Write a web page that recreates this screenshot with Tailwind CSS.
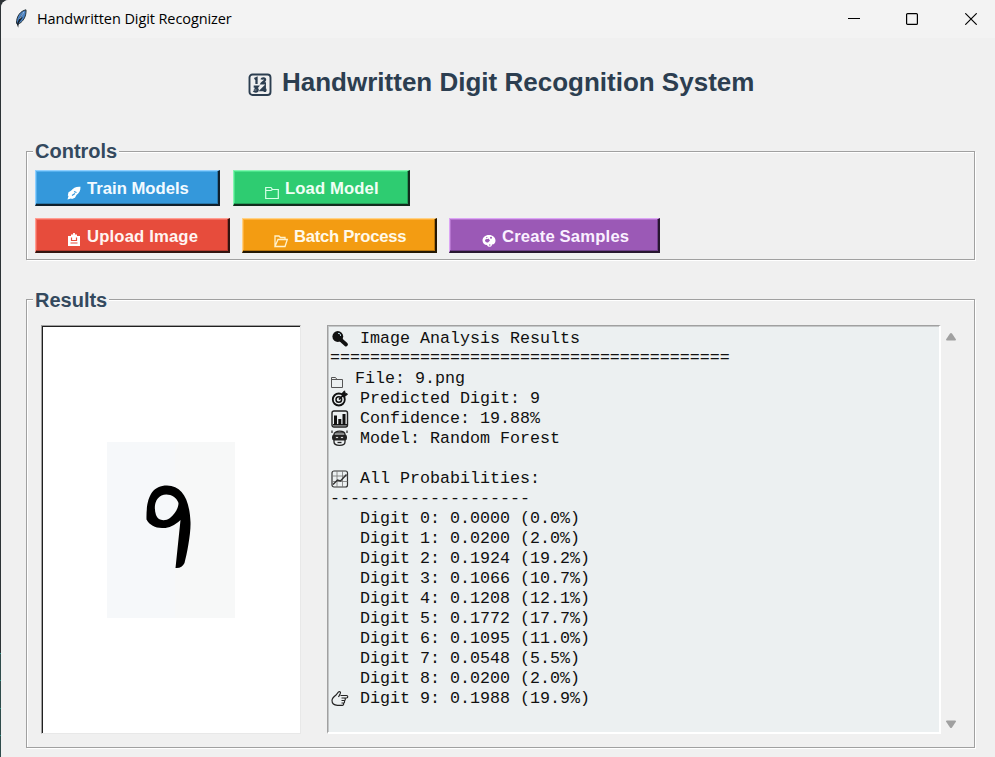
<!DOCTYPE html>
<html lang="en">
<head>
<meta charset="utf-8">
<title>Handwritten Digit Recognizer</title>
<script src="https://cdn.jsdelivr.net/npm/@tailwindcss/browser@4"></script>
</head>
<body class="w-[995px] h-[757px] overflow-hidden bg-[#2d3336] flex font-['Liberation_Sans',Arial,sans-serif]">
<div class="w-px h-[757px] shrink-0 flex flex-col justify-end">
  <div class="h-[27px] bg-[#2f4b4b] border-t border-[#2a9184]"></div>
  <div class="h-[28px] bg-[#2f4b4b] border-t border-[#2a9184]"></div>
  <div class="h-[27px] bg-[#2f4b4b] border-t border-[#2a9184]"></div>
  <div class="h-[22px] bg-[#2f4b4b] border-t border-[#2a9184]"></div>
</div>
<div class="h-[757px] w-[994px] rounded-tl-lg bg-[#f0f0f0] overflow-hidden flex flex-col">
  <header class="h-[38px] shrink-0 bg-[#f3f3f3] flex items-center pl-3">
    <svg class="w-4 h-5" viewBox="0 0 16 20"><path d="M13 .8C7.500 2 3.500 7 3.500 14L4.500 15.500C9.500 13.500 13.500 8 13 .8Z" fill="#4b83c5" stroke="#263238" stroke-width="1"/><path d="M10.500 3L8 9L10 8L5.800 14L5.200 18.800L3.800 15L7 8Z" fill="#17212b"/><path d="M10.800 3L6.500 10" stroke="#a9cdf2" stroke-width=".8"/></svg>
    <span class="ml-2 text-[14.5px] leading-5 tracking-[-0.09px] text-black font-['Open_Sans','Noto_Sans',sans-serif] whitespace-nowrap">Handwritten Digit Recognizer</span>
    <div class="ml-auto mr-[18px] flex items-center">
      <svg class="w-3 h-3" viewBox="0 0 12 12"><path d="M0 5.500H12" stroke="#000"/></svg>
      <svg class="w-3 h-3 ml-[46px]" viewBox="0 0 12 12"><rect x=".6" y=".6" width="10.800" height="10.800" rx="1" fill="none" stroke="#000" stroke-width="1.200"/></svg>
      <svg class="w-3 h-3 ml-[47px]" viewBox="0 0 12 12"><path d="M.3.3L11.700 11.700M11.700.3L.3 11.700" stroke="#000" stroke-width="1.150"/></svg>
    </div>
  </header>

  <h1 class="mt-[26px] h-9 shrink-0 flex items-center pl-[247px] text-[26px] leading-9 font-bold text-[#2c3e50] whitespace-nowrap">
    <svg class="w-6 h-6 mt-[5px] mr-[10px]" viewBox="0 0 24 24" fill="none" stroke="#2c3e50"><rect x="1.500" y="1.500" width="21" height="20.500" rx="3" stroke-width="1.900"/><path d="M6.500 6L8.500 5V11M13.500 6.500C14 4.700 17.500 5 17 7C16.700 8.500 14.500 9 13.700 10.300H18M5.700 13.700H9.500L8 15.500C10.500 15.500 10 18.700 7.800 18.500C6.700 18.500 6 18.200 5.700 17.700M16.800 19V13.500L13.300 17H18.500" stroke-width="2.300"/></svg>
    <span>Handwritten Digit Recognition System</span>
  </h1>

  <section class="mt-[51px] ml-[25px] w-[949px] h-[109px] shrink-0 border border-[#a0a0a0] shadow-[1px_1px_0_#fff,inset_1px_1px_0_#fff]">
    <h2 class="-mt-[13px] ml-[6px] w-[86px] pl-[2px] bg-[#f0f0f0] text-[20px] leading-6 font-bold text-[#34495e]">Controls</h2>
    <div class="mt-[7px] ml-2 flex gap-[13px]">
      <button class="w-[185px] h-9 bg-[#3498db] border-t border-l border-t-[#8fd0ff] border-l-[#8fd0ff] border-r-2 border-b-2 border-r-[#10202c] border-b-[#10202c] shadow-[inset_-1px_-1px_0_#2877aa,inset_1px_1px_0_#56b0ed] flex items-center pl-[31px] pt-0.5 text-[16.67px] leading-5 font-bold text-[#f2faff] whitespace-nowrap">
        <svg class="w-[14px] h-[14px] mt-[8px] mr-[6px]" viewBox="0 0 14 14"><path d="M13.500.8C9.500.3 6 2 4 4.800L1.500 6.200L.8 9.500L1.500 10L.5 13.500L4 12.600L5 13L8 11.800L9.500 9C12 7.500 13.700 4.500 13.500.8Z" fill="#fff"/><path d="M5 9.500L8 7.500M7 5.500L9.500 6.500" stroke="#3498db" stroke-width="1.200"/></svg>Train Models</button>
      <button class="w-[177px] h-9 bg-[#2ecc71] border-t border-l border-t-[#83f6b1] border-l-[#83f6b1] border-r-2 border-b-2 border-r-[#122c1d] border-b-[#122c1d] shadow-[inset_-1px_-1px_0_#249e58,inset_1px_1px_0_#4be48a] flex items-center pl-[31px] pt-0.5 text-[16.67px] leading-5 font-bold text-[#f0fff5] whitespace-nowrap">
        <svg class="w-[14px] h-[14px] mt-[9px] mr-[6px]" viewBox="0 0 14 14" fill="none" stroke="#d7ffe7" stroke-width="1.200"><path d="M.7 12.500V1.500H6L7.500 3.500H13.300V12.500ZM.7 4.500H6L7.500 3.500"/></svg><span class="tracking-[.12px]">Load Model</span></button>
    </div>
    <div class="mt-3 ml-2 flex gap-3">
      <button class="w-[195px] h-[35px] bg-[#e74c3c] border-t border-l border-t-[#ff9d92] border-l-[#ff9d92] border-r-2 border-b-2 border-r-[#321410] border-b-[#321410] shadow-[inset_-1px_-1px_0_#b43b2f,inset_1px_1px_0_#f36c5e] flex items-center pl-[31px] pt-[3px] text-[16.67px] leading-5 font-bold text-[#fff4f1] whitespace-nowrap">
        <svg class="w-[14px] h-[14px] mt-[7px] mr-[6px]" viewBox="0 0 14 14"><path d="M1 3H4V1.500H10V3H13V13H1Z" fill="#fff"/><path d="M4.500 4.500V7.500H9.500V4.500M3.500 10H10.500" stroke="#e74c3c" stroke-width="1.200" fill="none"/><path d="M7 0V6.500" stroke="#fff" stroke-width="1.800"/></svg><span class="tracking-[.16px]">Upload Image</span></button>
      <button class="w-[195px] h-[35px] bg-[#f39c12] border-t border-l border-t-[#ffd285] border-l-[#ffd285] border-r-2 border-b-2 border-r-[#231703] border-b-[#231703] shadow-[inset_-1px_-1px_0_#b8750b,inset_1px_1px_0_#ffb03a] flex items-center pl-[31px] pt-[3px] text-[16.67px] leading-5 font-bold text-[#fff9e9] whitespace-nowrap">
        <svg class="w-[14px] h-[14px] mt-[8px] mr-[6px]" viewBox="0 0 14 14" fill="none" stroke="#fff1cc" stroke-width="1.300"><path d="M1 12.500V2H5L6.500 3.500H11V5.500M1 12.500L4 5.500H13.300L11 12.500Z"/></svg><span class="tracking-[-.27px]">Batch Process</span></button>
      <button class="w-[211px] h-[35px] bg-[#9b59b6] border-t border-l border-t-[#dca5f5] border-l-[#dca5f5] border-r-2 border-b-2 border-r-[#281730] border-b-[#281730] shadow-[inset_-1px_-1px_0_#70408a,inset_1px_1px_0_#b574cf] flex items-center pl-[32px] pt-[3px] text-[16.67px] leading-5 font-bold text-[#faf0ff] whitespace-nowrap">
        <svg class="w-[14px] h-[14px] mt-[8px] mr-[6px]" viewBox="0 0 14 14"><path d="M7 1C3 1 .5 3.500.5 6.500C.5 9 2.500 11 5 11C5.500 13.500 10 13.500 10 10.500C12.500 10.500 13.500 8.500 13.500 6.500C13.500 3.500 11 1 7 1Z" fill="#fff"/><g fill="#9b59b6"><path d="M3 6C4 4.500 5.500 5.500 6.500 4.500L8 6.500L6 8.500C4 9 3 7.500 3 6Z"/><circle cx="4.800" cy="3.600" r=".7"/><circle cx="9" cy="3.700" r="1"/><circle cx="7.800" cy="11" r=".7"/></g></svg><span class="tracking-[.16px]">Create Samples</span></button>
    </div>
  </section>

  <section class="mt-[39px] ml-[25px] w-[949px] h-[449px] shrink-0 border border-[#a0a0a0] shadow-[1px_1px_0_#fff,inset_1px_1px_0_#fff]">
    <h2 class="-mt-[12px] ml-[6px] w-[76px] pl-[2px] bg-[#f0f0f0] text-[20px] leading-6 font-bold text-[#34495e]">Results</h2>
    <div class="mt-[13px] ml-[14px] flex">
      <div class="w-[260px] h-[409px] bg-white border border-t-[#a0a0a0] border-l-[#a0a0a0] border-r-[#e8e8e8] border-b-[#e8e8e8] shadow-[inset_1px_1px_0_#202020]">
        <svg class="mt-[116px] ml-[65px] w-[128px] h-[176px]" viewBox="0 0 128 176"><path d="M0 0H68V176H0Z" fill="#f6f8fa"/><path d="M68 0H128V176H68Z" fill="#f7f8f8"/><path d="M39.500 77.500C39 57 44 43.500 60 43.500C75 43.500 82.500 57 83.500 80C84 91 80 112 77.500 121C76 124.500 72.500 126.500 68.500 126L73.500 78C67 84 61 86.500 55 86C48 86 42.500 83 39.500 77.500ZM49 73C51 79 58 79.500 63 76C68 72 71.500 66 71.500 61C69.500 54 60.500 50.500 54.500 53.500C48 57 46.500 65 49 73Z" fill="#000" fill-rule="evenodd"/></svg>
      </div>
      <div class="ml-[26px] w-[614px] h-[409px] bg-[#ecf0f1] border-t border-l border-r-2 border-b-2 border-t-[#a0a0a0] border-l-[#a0a0a0] border-r-white border-b-white shadow-[inset_1px_1px_0_#c4c6c7] pt-[3px] pl-[2px] text-[16.67px] leading-5 text-[#101010] font-['Liberation_Mono','Courier_New',monospace] whitespace-nowrap overflow-hidden">
        <div class="h-5 flex items-center"><svg class="w-[18px] h-[18px] ml-px mr-[11px]" viewBox="0 0 18 18"><circle cx="6.800" cy="6.500" r="5.400" fill="#111"/><path d="M10 10L15 14.500" stroke="#111" stroke-width="3.800" stroke-linecap="round"/><path d="M7 3.500C8.500 2.800 10 4.500 9.500 6" stroke="#b9d5e0" stroke-width="1" fill="none"/></svg><span>Image Analysis Results</span></div>
        <div class="h-5 -mt-px mb-px">========================================</div>
        <div class="h-5 flex items-center"><svg class="w-[14px] h-[14px] mt-[5px] mr-[11px]" viewBox="0 0 14 14" fill="none" stroke="#555"><path d="M1.500 12.500V2.500H5.500L7 4.500H12.500V12.500ZM1.500 4.500H7"/></svg><span>File: 9.png</span></div>
        <div class="h-5 flex items-center"><svg class="w-[18px] h-[18px] ml-px mr-[11px]" viewBox="0 0 18 18" fill="none" stroke="#111"><circle cx="7.800" cy="9.500" r="6" stroke-width="1.800"/><circle cx="7.800" cy="9.500" r="2.800" stroke-width="1.500"/><path d="M8 9.500L13 4.500" stroke-width="1.700"/><path d="M11.500 3L13.500.8L14.200 3.200L16.500 4L14 6.500H11.500Z" fill="#111"/></svg><span>Predicted Digit: 9</span></div>
        <div class="h-5 flex items-center"><svg class="w-[18px] h-[18px] ml-px mr-[11px] -mt-px" viewBox="0 0 18 18"><rect x="1" y="1" width="15.500" height="16" rx="2" fill="none" stroke="#222" stroke-width="1.400"/><path d="M4.500 5.500V15M8.800 9V15M13 4V15" stroke="#111" stroke-width="3"/><path d="M2 14.800H16" stroke="#111" stroke-width="1.500"/></svg><span>Confidence: 19.88%</span></div>
        <div class="h-5 flex items-center"><svg class="w-[18px] h-[18px] ml-px mr-[11px] -mt-[2px]" viewBox="0 0 18 18" fill="none" stroke="#222"><path d="M3 5.500C3 1 14 1 14 5.500V13C14 17.500 3 17.500 3 13Z" stroke-width="1.300"/><path d="M4 3.800H13M1 1.500V4M16 1.500V4" stroke-width="1.200"/><rect x="1.500" y="6" width="14" height="5" rx="1.500" fill="#222"/><circle cx="6" cy="8.500" r="1.300" fill="#fff"/><circle cx="11" cy="8.500" r="1.300" fill="#fff"/><path d="M6.500 13.500H10.500" stroke-width="1.300"/></svg><span>Model: Random Forest</span></div>
        <div class="h-5"></div>
        <div class="h-5 flex items-center"><svg class="w-[18px] h-[18px] ml-px mr-[11px] -mt-px" viewBox="0 0 18 18" fill="none" stroke="#333"><rect x="1" y="1" width="15.500" height="16" rx="2" stroke-width="1.200"/><path d="M6 1V17M11.500 1V17M1 6H16.500M1 11.500H16.500" stroke="#777" stroke-width=".8"/><path d="M2 14.500L6.500 10L9.500 11L15.500 4.500" stroke-width="1.500"/></svg><span>All Probabilities:</span></div>
        <div class="h-5">--------------------</div>
        <div class="pl-[30px]">
          <p>Digit 0: 0.0000 (0.0%)</p>
          <p>Digit 1: 0.0200 (2.0%)</p>
          <p>Digit 2: 0.1924 (19.2%)</p>
          <p>Digit 3: 0.1066 (10.7%)</p>
          <p>Digit 4: 0.1208 (12.1%)</p>
          <p>Digit 5: 0.1772 (17.7%)</p>
          <p>Digit 6: 0.1095 (11.0%)</p>
          <p>Digit 7: 0.0548 (5.5%)</p>
          <p>Digit 8: 0.0200 (2.0%)</p>
        </div>
        <div class="h-5 flex items-center"><svg class="w-[18px] h-[18px] ml-px mr-[11px]" viewBox="0 0 18 18" fill="none" stroke="#222" stroke-width="1.150"><path d="M9.500 5.500H15.500C17.200 5.500 17.200 8 15.500 8H10.500M13.500 8C14.800 8.500 14.500 10.500 13.300 10.500H10.500M13 10.500C14 11 13.700 13 12.600 13H10.500M12.300 13C13 13.700 12.700 15.300 11.500 15.300H6.500C3 15.300 1 13.500 1 10.500C1 8 3 6.500 5 5L7.300 2.200C8.500 1 10 2 9.300 3.500L7.500 7"/></svg><span>Digit 9: 0.1988 (19.9%)</span></div>
      </div>
      <div class="h-[409px] w-[20px] flex flex-col items-center justify-between pt-[7px] pb-[5px]">
        <svg class="w-3 h-[9px]" viewBox="0 0 12 9"><path d="M1 7.500L5 1.500Q6 .3 7 1.500L11 7.500Q11 8.500 10 8.500H2Q1 8.500 1 7.500Z" fill="#a0a0a0"/></svg>
        <svg class="w-3 h-[9px]" viewBox="0 0 12 9"><path d="M1 1.500L5 7.500Q6 8.700 7 7.500L11 1.500Q11 .5 10 .5H2Q1 .5 1 1.500Z" fill="#a0a0a0"/></svg>
      </div>
    </div>
  </section>
</div>
</body>
</html>
